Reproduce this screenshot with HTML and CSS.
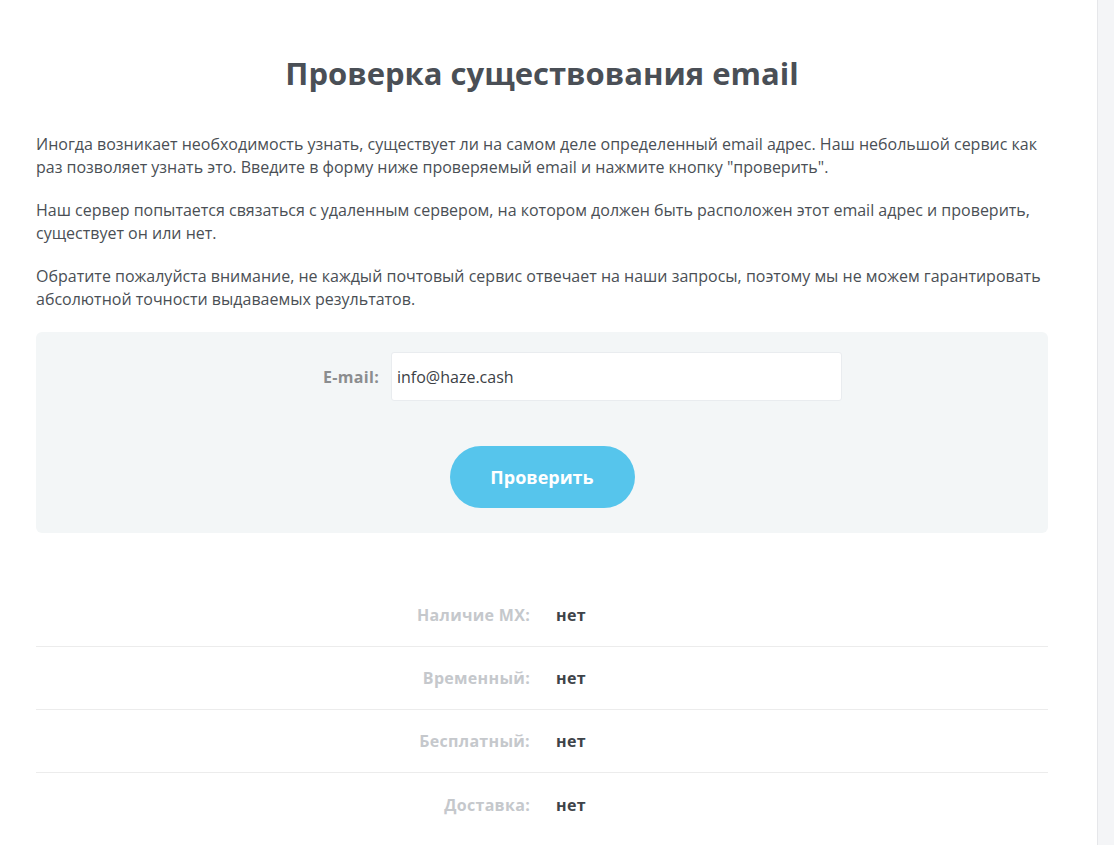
FILE: index.html
```html
<!DOCTYPE html>
<html lang="ru">
<head>
<meta charset="utf-8">
<title>Проверка существования email</title>
<link rel="stylesheet" href="styles.css">
</head>
<body>
<div class="page">
  <main class="main">
    <div class="container">
      <h1 class="title">Проверка существования email</h1>
      <p class="text">Иногда возникает необходимость узнать, существует ли на самом деле определенный email адрес. Наш небольшой сервис как раз позволяет узнать это. Введите в форму ниже проверяемый email и нажмите кнопку "проверить".</p>
      <p class="text">Наш сервер попытается связаться с удаленным сервером, на котором должен быть расположен этот email адрес и проверить, существует он или нет.</p>
      <p class="text">Обратите пожалуйста внимание, не каждый почтовый сервис отвечает на наши запросы, поэтому мы не можем гарантировать абсолютной точности выдаваемых результатов.</p>
      <form class="form">
        <div class="form-row">
          <label class="form-label" for="email">E-mail:</label>
          <input class="form-input" id="email" type="text" value="info@haze.cash">
        </div>
        <div class="form-actions">
          <button class="btn" type="button">Проверить</button>
        </div>
      </form>
      <div class="results">
        <div class="res-row"><span class="res-label">Наличие MX:</span><span class="res-value">нет</span></div>
        <div class="res-row"><span class="res-label">Временный:</span><span class="res-value">нет</span></div>
        <div class="res-row"><span class="res-label">Бесплатный:</span><span class="res-value">нет</span></div>
        <div class="res-row last"><span class="res-label">Доставка:</span><span class="res-value">нет</span></div>
      </div>
    </div>
  </main>
  <div class="scrollbar"></div>
</div>
</body>
</html>
```
FILE: styles.css
```css
* { box-sizing: border-box; }
html, body { margin: 0; padding: 0; height: 100%; overflow: hidden; }
body { background: #fff; color: #4a4f55; font-family: "Open Sans", "Noto Sans", sans-serif; }
.page { display: flex; height: 845px; }
.main { flex: 1; padding: 0 49px 0 36px; }
.container { width: 1012px; }
.scrollbar { width: 17px; background: #f4f5f7; border-left: 1px solid #e6e7ea; }

.title {
  margin: 51px 0 0;
  text-align: center;
  font-family: "Open Sans", sans-serif;
  font-weight: 700;
  font-size: 31px;
  line-height: 44px;
  color: #4a4f56;
}
.text {
  margin: 38px 0 0;
  font-size: 16px;
  line-height: 23px;
  color: #4a4f55;
}
.text + .text { margin-top: 20px; }

.form {
  margin-top: 21px;
  background: #f3f6f7;
  border-radius: 6px;
  padding: 20px 0 25px;
}
.form-row { display: flex; align-items: center; justify-content: center; }
.form-label {
  width: 355px;
  text-align: right;
  padding-right: 12px;
  font-weight: 700;
  font-size: 16px;
  letter-spacing: 0.3px;
  color: #8b8d8f;
}
.form-input {
  width: 451px;
  height: 49px;
  margin-right: 206px;
  border: 1px solid #e9ecef;
  border-radius: 3px;
  background: #fff;
  padding: 0 5px;
  font-family: "Open Sans", sans-serif;
  font-size: 16px;
  color: #3c4146;
  outline: none;
}
.form-actions { display: flex; justify-content: center; margin-top: 45px; }
.btn {
  width: 185px;
  height: 62px;
  border: none;
  border-radius: 31px;
  background: #56c5ec;
  color: #fff;
  font-family: "Open Sans", sans-serif;
  font-weight: 700;
  font-size: 18px;
}

.results { margin-top: 51px; }
.res-row {
  display: flex;
  align-items: center;
  height: 63px;
  border-bottom: 1px solid #ececec;
}
.res-row.last { border-bottom: none; }
.res-label {
  width: 494px;
  text-align: right;
  font-weight: 700;
  font-size: 16px;
  letter-spacing: 0.3px;
  color: #c5c8cc;
}
.res-value {
  margin-left: 26px;
  font-weight: 700;
  font-size: 16px;
  letter-spacing: 0.3px;
  color: #3e4349;
}
```
